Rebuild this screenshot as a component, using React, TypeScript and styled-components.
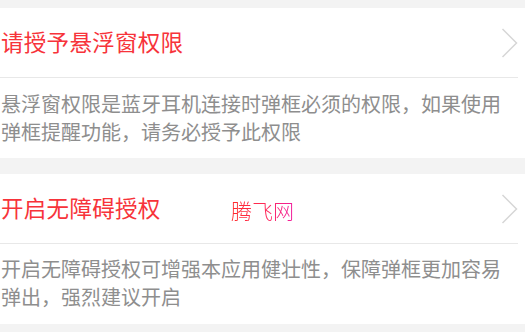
import React from "react";
import styled, { createGlobalStyle } from "styled-components";

const Global = createGlobalStyle`
  html, body { margin: 0; padding: 0; background: #f3f3f3; }
  body { font-family: "Noto Sans CJK SC", "Noto Sans", sans-serif; }
`;

const Page = styled.div`
  display: flex;
  flex-direction: column;
  gap: 16px;
  padding: 8px 0;
  width: 525px;
  box-sizing: border-box;
`;

const Card = styled.section`
  position: relative;
  background: #ffffff;
  padding-right: 7px;
`;

const TitleRow = styled.div`
  height: 69px;
  display: flex;
  align-items: center;
  justify-content: space-between;
  border-bottom: 1px solid #e8e8e8;
  padding-left: 1px;
`;

const Title = styled.h2`
  margin: 0;
  font-size: 22.5px;
  font-weight: 400;
  letter-spacing: 0.3px;
  color: #f7333a;
  line-height: 1;
  position: relative;
  top: -1px;
`;

const Desc = styled.p<{ $top: number; $bottom: number }>`
  margin: 0;
  padding: ${(p) => p.$top}px 8px ${(p) => p.$bottom}px 1px;
  font-size: 20px;
  line-height: 28px;
  color: #8e8e8e;
`;

const Watermark = styled.span`
  position: absolute;
  left: 231px;
  top: 26px;
  font-size: 21px;
  line-height: 1;
  font-weight: 300;
  background: linear-gradient(90deg, #ff2a2a, #ff2a5a 55%, #f01ea0);
  -webkit-background-clip: text;
  background-clip: text;
  color: transparent;
`;

const Chevron = () => (
  <svg width="17" height="30" viewBox="0 0 17 30" aria-hidden>
    <polyline
      points="1.5,1 15.5,15 1.5,29"
      fill="none"
      stroke="#d6d6d6"
      strokeWidth="1.5"
    />
  </svg>
);

export default function App() {
  return (
    <>
      <Global />
      <Page>
        <Card>
          <TitleRow>
            <Title>请授予悬浮窗权限</Title>
            <Chevron />
          </TitleRow>
          <Desc $top={12} $bottom={12}>
            悬浮窗权限是蓝牙耳机连接时弹框必须的权限，如果使用弹框提醒功能，请务必授予此权限
          </Desc>
        </Card>
        <Card>
          <TitleRow>
            <Title>开启无障碍授权</Title>
            <Chevron />
          </TitleRow>
          <Desc $top={11} $bottom={13}>
            开启无障碍授权可增强本应用健壮性，保障弹框更加容易弹出，强烈建议开启
          </Desc>
          <Watermark>腾飞网</Watermark>
        </Card>
      </Page>
    </>
  );
}
